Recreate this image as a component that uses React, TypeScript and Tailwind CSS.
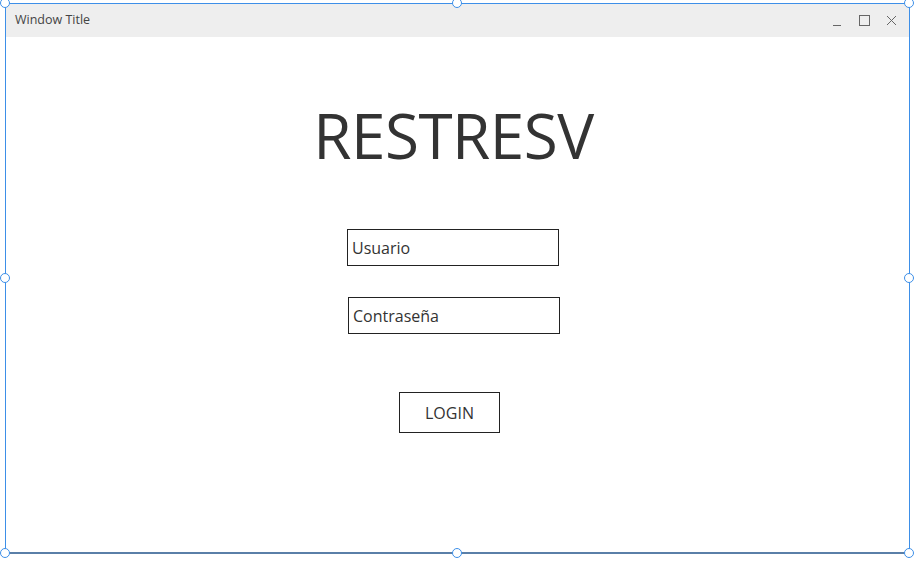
import React from "react";

const handle =
    "absolute w-[10px] h-[10px] rounded-full bg-white border-[1.5px] border-[#3d8fe8] -translate-x-1/2 -translate-y-1/2";

function WindowControls() {
    return (
        <div className="flex items-center gap-[15px] pr-[11px] text-[#666]">
            <svg width="12" height="12" viewBox="0 0 12 12">
                <line x1="1" y1="10.5" x2="9" y2="10.5" stroke="currentColor" strokeWidth="1" />
            </svg>
            <svg width="12" height="12" viewBox="0 0 12 12">
                <rect x="0.5" y="0.5" width="10" height="10" fill="none" stroke="currentColor" strokeWidth="1" />
            </svg>
            <svg width="12" height="12" viewBox="0 0 12 12">
                <line x1="1" y1="1" x2="10" y2="10" stroke="currentColor" strokeWidth="1" />
                <line x1="10" y1="1" x2="1" y2="10" stroke="currentColor" strokeWidth="1" />
            </svg>
        </div>
    );
}

export default function App() {
    return (
        <div
            className="w-[920px] h-[564px] bg-white relative"
            style={{ fontFamily: '"Open Sans", "Noto Sans", sans-serif' }}
        >
            <div className="absolute left-[5px] top-[3px] w-[905px] h-[551px] border-[1.5px] border-[#3d8fe8] border-b-[#5a7fa8] border-b-2 flex flex-col">
                {/* title bar */}
                <div className="h-[33px] bg-[#eeeeee] flex items-center justify-between shrink-0">
                    <span className="pl-[9px] text-[12.5px] text-[#444]">Window Title</span>
                    <WindowControls />
                </div>

                {/* content */}
                <div className="flex-1 flex flex-col items-center text-[#333]">
                    <h1 className="mt-[60px] mr-[8px] text-[62px] leading-[76px] tracking-[-0.5px]">RESTRESV</h1>
                    <div className="mt-[56px] mr-[9px] w-[212px] h-[37px] border border-[#222] flex items-center pl-[4px] text-[16px]">
                        Usuario
                    </div>
                    <div className="mt-[31px] mr-[7px] w-[212px] h-[37px] border border-[#222] flex items-center pl-[4px] text-[16px]">
                        Contraseña
                    </div>
                    <div className="mt-[58px] mr-[16px] w-[101px] h-[41px] border border-[#222] flex items-center justify-center text-[16px]">
                        LOGIN
                    </div>
                </div>
            </div>

            {/* selection handles */}
            <div className={handle} style={{ left: 5, top: 3 }} />
            <div className={handle} style={{ left: 457, top: 3 }} />
            <div className={handle} style={{ left: 909, top: 3 }} />
            <div className={handle} style={{ left: 5, top: 278 }} />
            <div className={handle} style={{ left: 909, top: 278 }} />
            <div className={handle} style={{ left: 5, top: 553 }} />
            <div className={handle} style={{ left: 457, top: 553 }} />
            <div className={handle} style={{ left: 909, top: 553 }} />
        </div>
    );
}
